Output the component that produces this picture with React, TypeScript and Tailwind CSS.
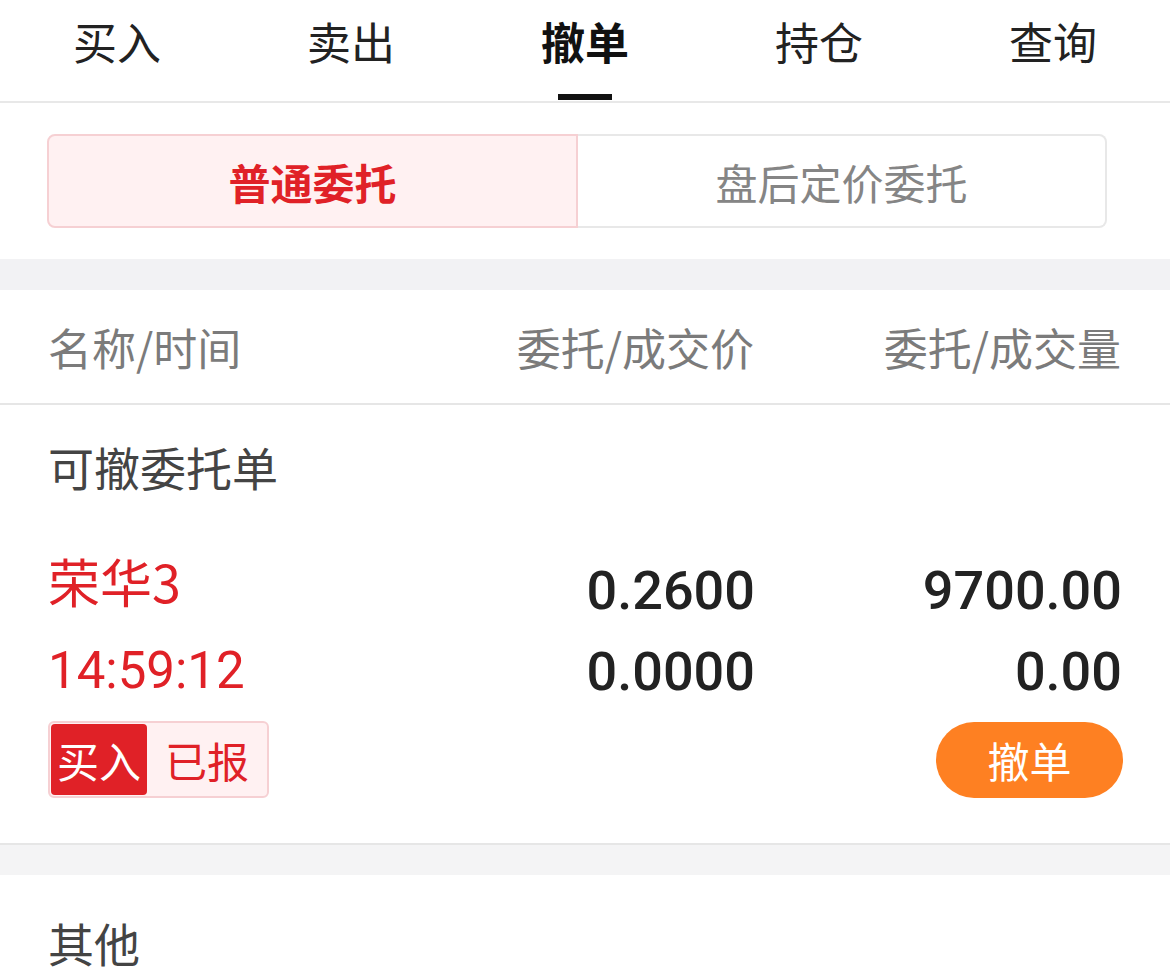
import React from "react";

const tabs = ["买入", "卖出", "撤单", "持仓", "查询"];

export default function App() {
  return (
    <div className="w-[1170px] h-[976px] overflow-hidden bg-white font-['Noto_Sans_CJK_SC',sans-serif]">
      {/* Tabs */}
      <div className="flex h-[103px] border-b-2 border-[#e8e8e8]">
        {tabs.map((t, i) => (
          <div key={t} className="relative flex-1 flex justify-center pt-[19px]">
            <span
              className={`text-[44px] leading-[44px] ${
                i === 2 ? "font-bold text-[#111]" : "text-[#222]"
              }`}
            >
              {t}
            </span>
            {i === 2 && (
              <div className="absolute bottom-[1px] left-1/2 -translate-x-1/2 w-[54px] h-[6px] bg-[#111]" />
            )}
          </div>
        ))}
      </div>

      {/* Segmented */}
      <div className="pl-[47px] pr-[63px] pt-[31px] pb-[31px]">
        <div className="flex h-[94px]">
          <div className="w-[531px] flex items-center justify-center border-2 border-[#f6d0d3] bg-[#fff1f2] rounded-l-[8px] text-[42px] font-bold text-[#e02127]">
            普通委托
          </div>
          <div className="flex-1 flex items-center justify-center border-2 border-l-0 border-[#e8e8e8] rounded-r-[8px] text-[42px] text-[#858585]">
            盘后定价委托
          </div>
        </div>
      </div>

      <div className="h-[31px] bg-[#f2f2f4]" />

      {/* Header */}
      <div className="grid grid-cols-[1fr_300px_367px] items-center h-[115px] pl-[48px] pr-[49px] border-b-2 border-[#e6e6e6] text-[44px] text-[#7b7b7b]">
        <div>名称/时间</div>
        <div className="text-right">委托/成交价</div>
        <div className="text-right">委托/成交量</div>
      </div>

      {/* Section title */}
      <div className="h-[122px] flex items-center px-[48px] text-[46px] text-[#444]">可撤委托单</div>

      {/* Item */}
      <div className="pt-[14px] pb-[45px] pl-[48px] pr-[48px] border-b-2 border-[#e6e6e6]">
        <div className="grid grid-cols-[1fr_300px_367px] items-center h-[90px]">
          <div className="text-[52px] text-[#e02127] -translate-y-[5px]">荣华3</div>
          <div className="text-right text-[54px] font-medium text-[#222] font-['Roboto',sans-serif] translate-y-[4px]">0.2600</div>
          <div className="text-right text-[54px] font-medium text-[#222] font-['Roboto',sans-serif] translate-y-[4px]">9700.00</div>
        </div>
        <div className="grid grid-cols-[1fr_300px_367px] items-center h-[76px]">
          <div className="text-[51px] text-[#e02127] font-['Roboto',sans-serif]">14:59:12</div>
          <div className="text-right text-[54px] font-medium text-[#222] font-['Roboto',sans-serif]">0.0000</div>
          <div className="text-right text-[54px] font-medium text-[#222] font-['Roboto',sans-serif]">0.00</div>
        </div>
        <div className="mt-[14px] flex items-center justify-between">
          <div className="flex h-[77px] border-2 border-[#f6d0d3] bg-[#fff1f2] rounded-[6px] p-[1px]">
            <div className="w-[96px] flex items-center justify-center bg-[#e02127] rounded-[4px] text-[42px] text-white">
              买入
            </div>
            <div className="pl-[18px] pr-[17px] flex items-center text-[42px] text-[#e02127]">已报</div>
          </div>
          <div className="w-[187px] h-[76px] rounded-full bg-[#fe8022] flex items-center justify-center text-[42px] text-white mr-[-1px]">
            撤单
          </div>
        </div>
      </div>

      <div className="h-[30px] bg-[#f4f4f5]" />

      <div className="h-[134px] flex items-center px-[48px] text-[46px] text-[#444]">其他</div>
    </div>
  );
}
